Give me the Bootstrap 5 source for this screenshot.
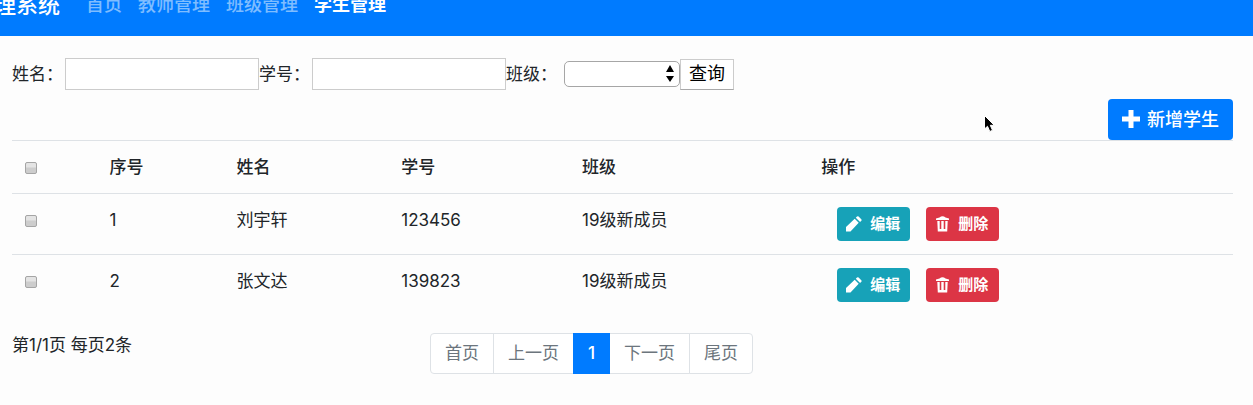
<!DOCTYPE html>
<html lang="zh-CN">
<head>
<meta charset="utf-8">
<meta name="viewport" content="width=device-width, initial-scale=1">
<title>学生管理</title>
<link href="https://cdn.jsdelivr.net/npm/bootstrap@5.3.0/dist/css/bootstrap.min.css" rel="stylesheet">
<style>
  body { font-family: Inter, "Noto Sans CJK SC", sans-serif; font-size: 17px; line-height: 26px; color: #212529; background: #fdfdfd; }
  .top-bar { height: 36px; background: #007bff; overflow: hidden; }
  .top-bar .navbar { margin-top: -8px; padding: 0; gap: 18px; font-size: 18px; font-weight: 500; }
  .top-bar .navbar-brand { width: 60px; font-size: 22px; line-height: 24px; font-weight: 500; padding: 0; margin: 0; display: flex; justify-content: flex-end; white-space: nowrap; }
  .top-bar .nav-link { padding: 0 8px; color: rgba(255,255,255,.5); }
  .top-bar .nav-link.active { color: #fff; font-weight: 700; }
  .page-body { padding: 22px 20px 0 12px; }
  .search label { padding-right: 2px; }
  .search input { width: 194px; height: 32px; border: 1px solid #ccc; background: #fff; padding: 2px 4px; }
  .class-pick { margin-left: 5px; }
  .class-pick select { width: 116px; height: 26px; border: 1px solid #a6a6a6; border-radius: 5px; background: #fff; appearance: none; padding: 0 20px 0 6px; }
  .class-pick svg { right: 5px; top: 4px; pointer-events: none; }
  .search button { height: 31px; padding: 0 8px; border: 1px solid #ccc; border-bottom-color: #a8a8a8; background: #fff; color: #000; font-size: 18px; line-height: 26px; }
  .btn { --bs-btn-border-radius: 4px; font-weight: 700; color: #fff; border: 0; display: inline-flex; align-items: center; }
  .btn:hover { color: #fff; }
  .add-line { margin-top: 9px; }
  .btn-add { height: 41px; padding: 0 14px; gap: 7px; font-size: 18px; font-weight: 500; background: #007bff; }
  .btn-add svg { margin-bottom: 2px; }
  .btn-row { height: 34px; width: 73px; padding: 0 9px; gap: 8px; font-size: 15px; white-space: nowrap; }
  .btn-edit { background: #17a2b8; }
  .btn-del { background: #dc3545; }
  .students { table-layout: fixed; --bs-table-bg: transparent; --bs-table-color: #212529; margin: 0; }
  .students > :not(caption) > * > * { padding: 13px 12px; border-width: 1px 0 0; border-color: #dee2e6; line-height: 26px; vertical-align: top; }
  .students th { font-weight: 500; }
  .students input { appearance: none; display: block; width: 12px; height: 12px; margin: 8px 0 0 1px; border: 1px solid #a5a5a5; border-radius: 2px; background: linear-gradient(#e4e4e4 40%, #cdcdcd 50%); }
  .students input:checked { background: #007bff; }
  .c-check { width: 7%; } .c-no { width: 10.4%; } .c-name { width: 13.5%; } .c-num { width: 14.8%; } .c-class { width: 19.6%; }
  .pager { margin-top: 17px; }
  .pagination { --bs-pagination-font-size: 17px; --bs-pagination-padding-x: 14px; --bs-pagination-padding-y: 7px; --bs-pagination-color: #6c757d; --bs-pagination-bg: #fff; --bs-pagination-border-radius: 4px; --bs-pagination-active-bg: #007bff; --bs-pagination-active-border-color: #007bff; margin: 1px 0 0 11px; line-height: 25px; }
  .pagination .active { font-weight: 500; }
  .pointer { left: 984px; top: 79px; pointer-events: none; }
</style>
</head>
<body>
<svg class="d-none" xmlns="http://www.w3.org/2000/svg">
  <symbol id="pencil" viewBox="0 0 16 16"><path d="M0 15.500V11L8.700 2.800l4 4L4.500 15.500zM9.800 1.800l1.200-1.300q.8-.7 1.600 0l2.700 2.700q.7.800 0 1.600l-1.200 1.200z" fill="#fff"/></symbol>
  <symbol id="trash" viewBox="0 0 14 16"><path d="M4 1.500Q7-.8 10 1.500l3.500 1V4H.5V2.500zM1.800 5h2.400v8h1.600V5h2.400v8h1.600V5h2.400l-.5 10.500H2.300z" fill="#fff"/></symbol>
</svg>
<header class="top-bar">
  <nav class="navbar navbar-expand flex-nowrap justify-content-start">
    <a class="navbar-brand text-white" href="#">管理系统</a>
    <div class="navbar-nav">
      <a class="nav-link" href="#">首页</a>
      <a class="nav-link" href="#">教师管理</a>
      <a class="nav-link" href="#">班级管理</a>
      <a class="nav-link active" href="#" aria-current="page">学生管理</a>
    </div>
  </nav>
</header>
<main class="page-body position-relative">
  <form class="search d-flex align-items-center">
    <label for="name">姓名：</label><input id="name" type="text">
    <label for="number">学号：</label><input id="number" type="text">
    <label for="class">班级：</label>
    <div class="class-pick position-relative d-flex">
      <select id="class"><option></option><option>19级新成员</option></select>
      <svg class="position-absolute" width="10" height="18" viewBox="0 0 10 18"><path d="M5 0l4 7H1zM5 17l4-6H1z" fill="#000"/></svg>
    </div>
    <button type="button">查询</button>
  </form>
  <div class="d-flex justify-content-end add-line">
    <button class="btn btn-add" type="button"><svg width="18" height="18" viewBox="0 0 18 18"><path d="M6.500 0h5v6.500H18v5h-6.500V18h-5v-6.500H0v-5h6.500z" fill="#fff"/></svg>新增学生</button>
  </div>
  <table class="table students">
    <colgroup><col class="c-check"><col class="c-no"><col class="c-name"><col class="c-num"><col class="c-class"><col></colgroup>
    <thead><tr><th><input type="checkbox" aria-label="全选"></th><th>序号</th><th>姓名</th><th>学号</th><th>班级</th><th>操作</th></tr></thead>
    <tbody>
      <tr><td><input type="checkbox" aria-label="选择刘宇轩"></td><td>1</td><td>刘宇轩</td><td>123456</td><td>19级新成员</td>
        <td><div class="d-flex gap-3 ps-3"><button class="btn btn-row btn-edit" type="button"><svg width="16" height="16"><use href="#pencil"/></svg>编辑</button><button class="btn btn-row btn-del" type="button"><svg width="15" height="16"><use href="#trash"/></svg>删除</button></div></td></tr>
      <tr><td><input type="checkbox" aria-label="选择张文达"></td><td>2</td><td>张文达</td><td>139823</td><td>19级新成员</td>
        <td><div class="d-flex gap-3 ps-3"><button class="btn btn-row btn-edit" type="button"><svg width="16" height="16"><use href="#pencil"/></svg>编辑</button><button class="btn btn-row btn-del" type="button"><svg width="15" height="16"><use href="#trash"/></svg>删除</button></div></td></tr>
    </tbody>
  </table>
  <div class="row g-0 pager">
    <div class="col-4">第1/1页 每页2条</div>
    <nav class="col-8" aria-label="分页">
      <ul class="pagination">
        <li class="page-item"><a class="page-link" href="#">首页</a></li>
        <li class="page-item"><a class="page-link" href="#">上一页</a></li>
        <li class="page-item active"><a class="page-link" href="#">1</a></li>
        <li class="page-item"><a class="page-link" href="#">下一页</a></li>
        <li class="page-item"><a class="page-link" href="#">尾页</a></li>
      </ul>
    </nav>
  </div>
  <svg class="pointer position-absolute" width="12" height="18" viewBox="0 0 12 18"><path d="M.5.500v13.500l3-2.700 2.300 5.200 2.700-1.200-2.200-5h4z" fill="#000" stroke="#fff"/></svg>
</main>
<script src="https://cdn.jsdelivr.net/npm/bootstrap@5.3.0/dist/js/bootstrap.bundle.min.js"></script>
</body>
</html>
